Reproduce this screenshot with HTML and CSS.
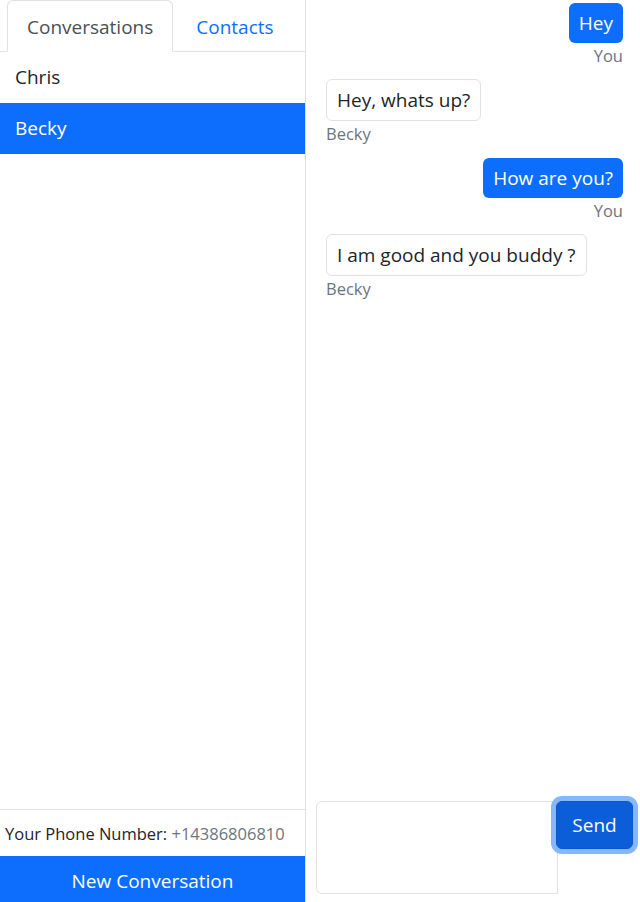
FILE: index.html
```html
<!DOCTYPE html>
<html lang="en">
<head>
<meta charset="utf-8">
<title>Chat</title>
<link rel="stylesheet" href="styles.css">
</head>
<body>
<div class="app">
  <aside class="sidebar">
    <nav class="tabs">
      <a class="tab active">Conversations</a>
      <a class="tab">Contacts</a>
    </nav>
    <div class="list">
      <div class="item">Chris</div>
      <div class="item active">Becky</div>
    </div>
    <div class="phone">Your Phone Number: <span class="muted">+14386806810</span></div>
    <button class="new-btn">New Conversation</button>
  </aside>
  <main class="chat">
    <div class="messages">
      <div class="msg me"><div class="bubble">Hey</div><div class="who">You</div></div>
      <div class="msg"><div class="bubble">Hey, whats up?</div><div class="who">Becky</div></div>
      <div class="msg me"><div class="bubble">How are you?</div><div class="who">You</div></div>
      <div class="msg"><div class="bubble">I am good and you buddy ?</div><div class="who">Becky</div></div>
    </div>
    <form class="composer">
      <textarea class="input"></textarea>
      <button type="button" class="send">Send</button>
    </form>
  </main>
</div>
</body>
</html>
```

FILE: styles.css
```css
* { box-sizing: border-box; }
html, body { margin: 0; padding: 0; height: 100%; }
body {
  font-family: "Open Sans", "Noto Sans", sans-serif;
  font-size: 19px;
  line-height: 30px;
  color: #212529;
  background: #fff;
  overflow: hidden;
}
.app { display: flex; height: 902px; }
.sidebar {
  width: 306px;
  flex-shrink: 0;
  border-right: 1px solid #dee2e6;
  display: flex;
  flex-direction: column;
}
.tabs {
  display: flex;
  padding-left: 7px;
  border-bottom: 1px solid #dee2e6;
  height: 52px;
  width: 305px;
}
.tab {
  display: block;
  padding: 11px 19px 9px;
  height: 52px;
  margin-bottom: -1px;
  border: 1px solid transparent;
  border-top-left-radius: 6px;
  border-top-right-radius: 6px;
  color: #0d6efd;
  cursor: pointer;
}
.tab.active {
  color: #495057;
  border-color: #dee2e6 #dee2e6 #fff;
  background: #fff;
}
.tab + .tab { padding-left: 22px; }
.list { flex: 1; }
.item {
  height: 51px;
  padding: 10px 15px;
}
.item.active { background: #0d6efd; color: #fff; }
.phone {
  border-top: 1px solid #dee2e6;
  padding: 11px 5px 9px;
  font-size: 16.5px;
  line-height: 26px;
  height: 47px;
}
.muted { color: #6c757d; }
.new-btn {
  display: block;
  width: 100%;
  height: 46px;
  border: 0;
  margin: 0;
  background: #0d6efd;
  color: #fff;
  font: inherit;
  line-height: 30px;
  padding: 10px 0 6px;
}
.chat {
  flex: 1;
  display: flex;
  flex-direction: column;
  min-width: 0;
}
.messages {
  flex: 1;
  display: flex;
  flex-direction: column;
  align-items: flex-start;
  gap: 10px;
  padding: 3px 17px 0 20px;
}
.msg { display: flex; flex-direction: column; align-items: flex-start; }
.msg:not(.me) { padding-bottom: 1px; }
.msg.me { align-self: flex-end; align-items: flex-end; }
.bubble {
  border: 1px solid #dee2e6;
  border-radius: 6px;
  padding: 5px 10px;
}
.msg.me .bubble {
  background: #0d6efd;
  border: 0;
  color: #fff;
}
.who {
  color: #6c757d;
  font-size: 16.5px;
  line-height: 26px;
}
.composer {
  display: flex;
  align-items: flex-start;
  padding: 12px 0 8px 10px;
  margin: 0;
}
.input {
  flex-shrink: 0;
  width: 242px;
  height: 93px;
  border: 1px solid #dee2e6;
  border-radius: 6px 0 0 6px;
  resize: none;
  font: inherit;
  margin: 0;
}
.send {
  flex-shrink: 0;
  margin-left: -2px;
  width: 77px;
  height: 48px;
  background: #0b5ed7;
  border: 1px solid #0a58ca;
  border-radius: 6px;
  color: #fff;
  font: inherit;
  line-height: 30px;
  box-shadow: 0 0 0 5px #86b7fe;
  padding: 0;
}
```
